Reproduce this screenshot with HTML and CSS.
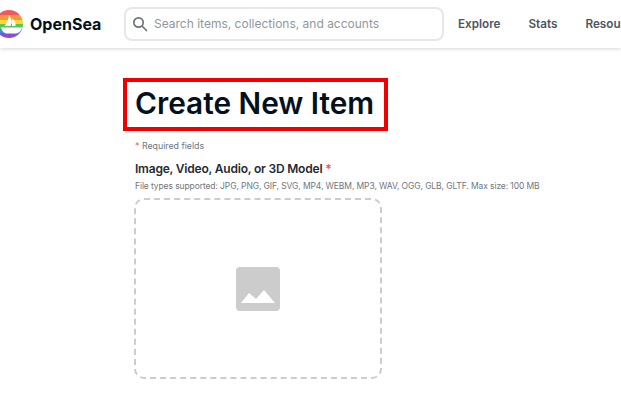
FILE: index.html
```html
<!DOCTYPE html>
<html lang="en">
<head>
    <meta charset="UTF-8">
    <title>Create New Item</title>
    <link rel="stylesheet" href="styles.css">
</head>
<body>
    <header class="navbar">
        <div class="brand">
            <svg class="brand-logo" width="28" height="28" viewBox="0 0 28 28">
                <defs>
                    <clipPath id="logo-clip"><circle cx="14" cy="14" r="14"/></clipPath>
                </defs>
                <g clip-path="url(#logo-clip)">
                    <rect width="28" height="5" fill="#ef5a5a"/>
                    <rect y="5" width="28" height="5" fill="#f59a32"/>
                    <rect y="10" width="28" height="4" fill="#f6d935"/>
                    <rect y="14" width="28" height="5" fill="#57c75a"/>
                    <rect y="19" width="28" height="4" fill="#3c8fe8"/>
                    <rect y="23" width="28" height="5" fill="#8a4fd0"/>
                </g>
                <path d="M14 5c2.500 3 3.500 7 1.500 11h-6c2.500-3 4-7 4.500-11z" fill="#fff"/>
                <path d="M17.500 8.500c2.500 2 3.500 5 3 7.500h-3.500z" fill="#fff"/>
                <path d="M6 17.500h21c-1 4-4 6-7 6h-8c-3 0-5-2.500-6-6z" fill="#fff"/>
            </svg>
            <span class="brand-name">OpenSea</span>
        </div>
        <div class="search">
            <svg width="16" height="16" viewBox="0 0 16 16" fill="none" stroke="#6f747b" stroke-width="1.700" stroke-linecap="round">
                <circle cx="6.500" cy="6.500" r="4.700"/>
                <path d="M10 10l4.500 4.500"/>
            </svg>
            <span class="search-text">Search items, collections, and accounts</span>
        </div>
        <nav class="nav-links">
            <a>Explore</a>
            <a>Stats</a>
            <a>Resources</a>
        </nav>
    </header>

    <main class="content">
        <h1 class="page-title">Create New Item</h1>
        <p class="required-note"><span class="star">*</span> Required fields</p>
        <h2 class="field-label">Image, Video, Audio, or 3D Model <span class="star">*</span></h2>
        <p class="field-hint">File types supported: JPG, PNG, GIF, SVG, MP4, WEBM, MP3, WAV, OGG, GLB, GLTF. Max size: 100 MB</p>
        <div class="dropzone">
            <svg width="44" height="44" viewBox="0 0 44 44">
                <rect width="44" height="44" rx="4" fill="#cccccc"/>
                <path d="M5 36l8-10 7 6 8-9 11 13z" fill="#fff"/>
            </svg>
        </div>
    </main>
</body>
</html>
```

FILE: styles.css
```css
html, body {
    margin: 0;
    height: 100%;
    overflow: hidden;
}

body {
    font-family: Inter, "Liberation Sans", sans-serif;
    background-color: #fff;
    color: #04111d;
}

.navbar {
    display: flex;
    align-items: center;
    box-sizing: border-box;
    height: 48px;
    padding-bottom: 1px;
    background: #fff;
    box-shadow: 0 1px 4px rgba(0,0,0,0.16);
    white-space: nowrap;
    overflow: hidden;
}

.brand {
    display: flex;
    align-items: center;
    gap: 7px;
    width: 129px;
    margin-left: -5px;
    flex-shrink: 0;
}

.brand-logo {
    flex-shrink: 0;
}

.brand-name {
    font-size: 16px;
    font-weight: 700;
}

.search {
    display: flex;
    align-items: center;
    gap: 6px;
    box-sizing: border-box;
    width: 320px;
    height: 34px;
    padding: 0 6px;
    border: 2px solid #e5e8eb;
    border-radius: 8px;
    flex-shrink: 0;
}

.search-text {
    font-size: 12px;
    color: #9097a0;
}

.nav-links {
    display: flex;
    gap: 28px;
    margin-left: 14px;
}

.nav-links a {
    font-size: 11.700px;
    font-weight: 600;
    color: #4d5560;
}

.content {
    padding: 30px 0 0 123px;
}

.page-title {
    display: inline-block;
    margin: 0;
    padding: 4px 10px 6px 8px;
    border: 4px solid #f00000;
    font-size: 29.800px;
    font-weight: 600;
    line-height: 35px;
    color: #04111d;
}

.required-note {
    margin: 8px 0 0 12px;
    font-size: 8.800px;
    line-height: 14px;
    color: #70767e;
}

.star {
    color: #eb5757;
}

.field-label {
    margin: 8px 0 0 12px;
    font-size: 12px;
    letter-spacing: -0.2px;
    font-weight: 600;
    line-height: 16px;
    color: #1f2a36;
}

.field-hint {
    margin: 3px 0 0 12px;
    font-size: 8.500px;
    letter-spacing: -0.1px;
    line-height: 13px;
    color: #70767e;
}

.dropzone {
    display: flex;
    align-items: center;
    justify-content: center;
    box-sizing: border-box;
    width: 248px;
    height: 181px;
    margin: 5px 0 0 11px;
    border: 2px dashed #cccccc;
    border-radius: 10px;
}
```
